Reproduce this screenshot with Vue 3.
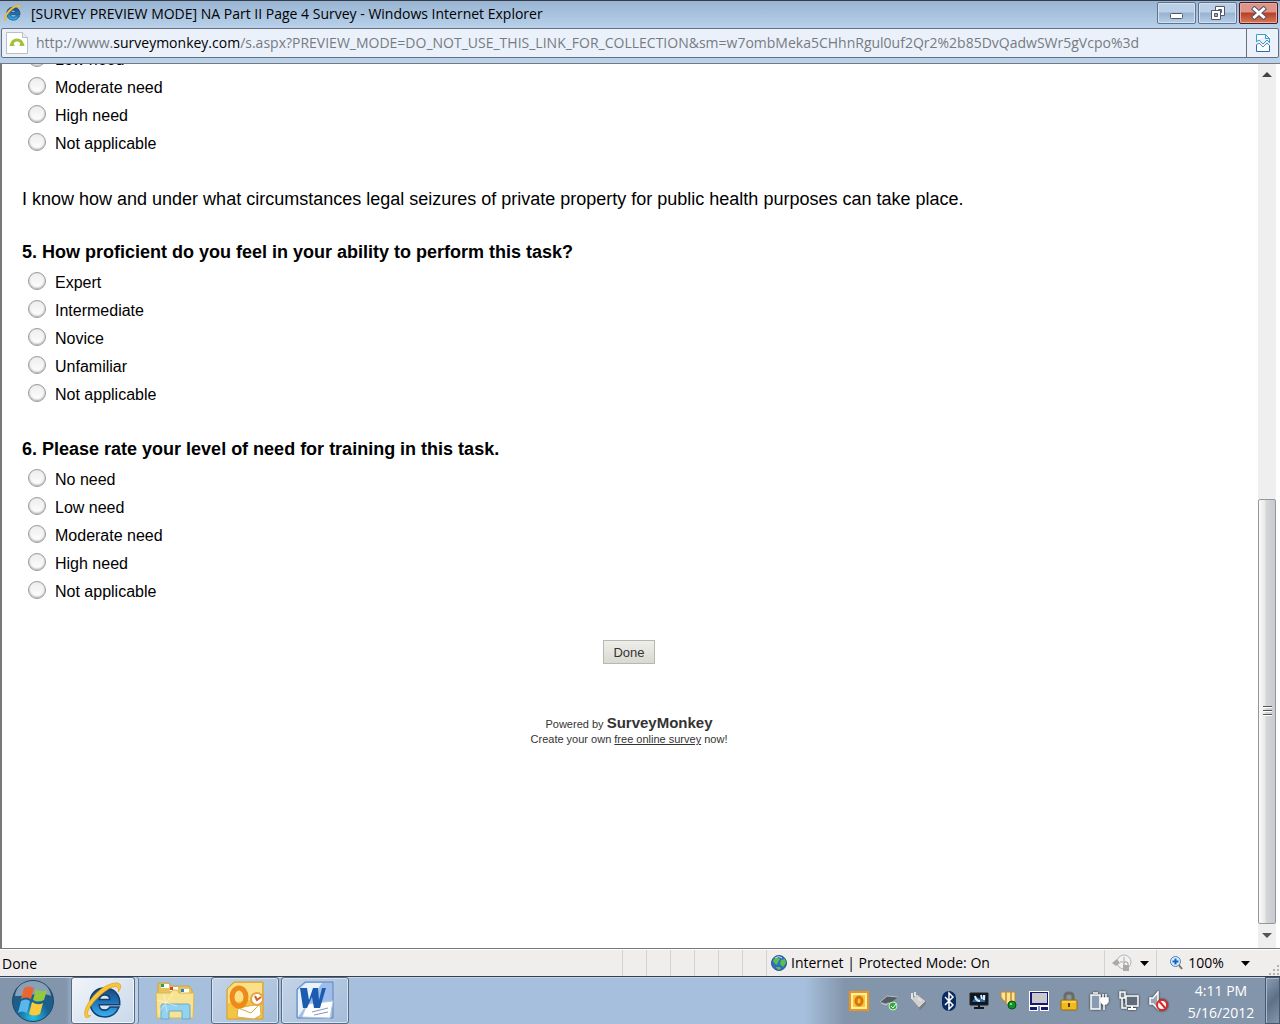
<script setup>
import { ref } from "vue";

const proficiency = ["Expert", "Intermediate", "Novice", "Unfamiliar", "Not applicable"];
const need = ["No need", "Low need", "Moderate need", "High need", "Not applicable"];

const questions = [
  { id: "q4", options: need.slice(1) },
  {
    id: "q5",
    intro: "I know how and under what circumstances legal seizures of private property for public health purposes can take place.",
    title: "5. How proficient do you feel in your ability to perform this task?",
    options: proficiency
  },
  { id: "q6", title: "6. Please rate your level of need for training in this task.", options: need }
];

const answers = ref({});
</script>

<template>
  <div class="window">
    <header class="titlebar">
      <svg class="ie-small" viewBox="0 0 50 50">
        <defs>
          <linearGradient id="ieBlue" x1="0" y1="0" x2="0" y2="1">
            <stop offset="0" stop-color="#1b4777" />
            <stop offset=".45" stop-color="#1f6fb5" />
            <stop offset="1" stop-color="#38b4f2" />
          </linearGradient>
        </defs>
        <g id="ieLogo">
          <path d="M27 8C15 8 8 16 8 27s8 19 20 19c8 0 15-5 18-13H34c-2 3-4 4-7 4-5 0-7-3-7-7h27C48 16 39 8 27 8zM20 23c1-4 3-6 7-6s7 2 7 6z" fill="url(#ieBlue)" stroke="#123f70" stroke-width="2" />
          <path d="M3 47C-4 40 8 20 23 9 34 1 46-1 48 4c1 3-1 7-3 9 1-4 0-7-4-7C31 6 8 28 5 39c-1 3 0 6 4 5-2 2-4 3-6 3z" fill="#fcc536" stroke="#dfa01d" />
        </g>
      </svg>
      <h1>[SURVEY PREVIEW MODE] NA Part II Page 4 Survey - Windows Internet Explorer</h1>
      <div class="controls">
        <button aria-label="Minimize">
          <svg width="14" height="14"><rect x=".5" y="7.5" width="12" height="5" rx="1" fill="#fff" stroke="#535666" /></svg>
        </button>
        <button aria-label="Restore">
          <svg width="16" height="16">
            <path d="M5.5 1.5h9v9h-9zM8.5 4.5h3v3h-3z" fill="#fff" fill-rule="evenodd" stroke="#535666" />
            <path d="M1.5 5.5h9v9h-9z" fill="#fff" stroke="#535666" />
            <path d="M4.5 8.5h3v3h-3z" fill="#98b3d1" stroke="#535666" />
          </svg>
        </button>
        <button class="close" aria-label="Close">
          <svg width="16" height="14">
            <path d="M3.5 3l9 8M12.5 3l-9 8" stroke="#535666" stroke-width="5" stroke-linecap="square" />
            <path d="M3.5 3l9 8M12.5 3l-9 8" stroke="#fff" stroke-width="3" stroke-linecap="square" />
          </svg>
        </button>
      </div>
    </header>

    <div class="addressbar">
      <svg class="favicon" width="22" height="24">
        <path d="M.5 1.5h16l5 5v16H.5z" fill="#fff" stroke="#b9bdc4" />
        <path d="M16.5 1.5v5h5" fill="#eee" stroke="#b9bdc4" />
        <path d="M5.5 14q1-5 5.5-5t5.5 5" fill="none" stroke="#a5c13b" stroke-width="3" />
        <path d="M3.5 15q0-3 2.500-3t2.500 3zM13.5 15q0-3 2.500-3t2.500 3z" fill="#a5c13b" />
      </svg>
      <div class="url">http://www.<b>surveymonkey.com</b>/s.aspx?PREVIEW_MODE=DO_NOT_USE_THIS_LINK_FOR_COLLECTION&amp;sm=w7ombMeka5CHhnRgul0uf2Qr2%2b85DvQadwSWr5gVcpo%3d</div>
      <button class="compat" aria-label="Compatibility View">
        <svg width="16" height="20" fill="none">
          <path d="M1 8V1h9l5 5v3V1" fill="#fff" />
          <path d="M1.5 8V1.5h9l4 4V9" stroke="#2ca4d3" />
          <path d="M10.5 1.5v4h4" stroke="#2ca4d3" />
          <path d="M1.5 12v6.5h13V12" fill="#fff" stroke="#3268ba" />
          <path d="M1 9l3-2 4 4 4-4 3 3M1 12l3-2 4 4 4-4 3 3" stroke="#4b91c5" />
        </svg>
      </button>
    </div>

    <div class="viewport">
      <main class="page">
        <section v-for="q in questions" :key="q.id">
          <p v-if="q.intro" class="intro">{{ q.intro }}</p>
          <h2 v-if="q.title">{{ q.title }}</h2>
          <label v-for="option in q.options" :key="option" class="option">
            <input v-model="answers[q.id]" type="radio" :name="q.id" :value="option" />
            {{ option }}
          </label>
        </section>
        <button class="done">Done</button>
        <footer>
          <div class="powered">Powered by <strong>SurveyMonkey</strong></div>
          <div>Create your own <a href="#">free online survey</a> now!</div>
        </footer>
      </main>
      <div class="scrollbar">
        <svg width="10" height="5"><path d="M0 5l5-5 5 5z" fill="#444" /></svg>
        <div class="track">
          <div class="thumb"><i></i><i></i><i></i></div>
        </div>
        <svg width="10" height="5"><path d="M0 0l5 5 5-5z" fill="#555" /></svg>
      </div>
    </div>

    <div class="statusbar">
      <span class="message">Done</span>
      <span v-for="n in 6" :key="n" class="cell"></span>
      <span class="zone">
        <svg width="16" height="16">
          <circle cx="8" cy="8" r="7.5" fill="#2f6dc2" stroke="#31548b" />
          <path d="M2 5l4-3 3 2-2 3-1 3-3-2zM10 5l4-1 1 4-3 4-3-3zM5 12h4l1 2-3 1z" fill="#5ac04b" />
          <path d="M4 3q4-3 7 0" stroke="#c5e7fa" fill="none" />
        </svg>
        Internet | Protected Mode: On
      </span>
      <button class="privacy" aria-label="InPrivate filtering">
        <svg width="20" height="18">
          <circle cx="12" cy="8" r="7" fill="#f2f2f2" stroke="#b3b3b3" />
          <path d="M0 9l5-4 3 4-4 3z" fill="#aaa" />
          <path d="M12 3v5H8" fill="none" stroke="#aaa" />
          <path d="M12 11V9q2-3 4 0v2" fill="none" stroke="#999" />
          <rect x="11" y="11" width="6" height="6" fill="#aaa" />
        </svg>
        <svg width="9" height="5"><path d="M0 0h9L4.5 5z" /></svg>
      </button>
      <button class="zoom">
        <svg width="13" height="14">
          <path d="M8 8l4 5" stroke="#8e6652" stroke-width="2" />
          <circle cx="5.5" cy="5.5" r="5" fill="#d8efff" stroke="#4c83b8" />
          <path d="M2.5 5.5h6M5.5 2.500v6" stroke="#1765b5" stroke-width="2" />
        </svg>
        <span>100%</span>
        <svg width="9" height="5"><path d="M0 0h9L4.5 5z" /></svg>
      </button>
      <svg class="grip" width="11" height="11" fill="#b5b1b1">
        <path d="M8 0h2v2H8zM4 4h2v2H4zM8 4h2v2H8zM0 8h2v2H0zM4 8h2v2H4zM8 8h2v2H8z" />
      </svg>
    </div>

    <nav class="taskbar">
      <button class="start" aria-label="Start">
        <svg width="44" height="44">
          <defs>
            <radialGradient id="orb" cx=".5" cy=".9" r=".8">
              <stop offset="0" stop-color="#25c2e8" />
              <stop offset=".5" stop-color="#176292" />
              <stop offset="1" stop-color="#28547b" />
            </radialGradient>
          </defs>
          <circle cx="22" cy="22" r="20.5" fill="url(#orb)" stroke="#214765" />
          <path d="M4 17C6-3 38-3 40 17 30 12 15 18 4 17z" fill="#fff" opacity=".45" />
          <path d="M13 9q5-3 10 0l-3 11q-5-3-10 0z" fill="#ed6430" />
          <path d="M25 10q5 4 11 1l-3 10q-6 3-11 0z" fill="#93c83f" />
          <path d="M10 22q5-3 9 0l-3 12q-5-3-9 0z" fill="#5ab7ec" />
          <path d="M21 23q6 4 11 1l-3 11q-6 3-11 0z" fill="#fbc93c" />
        </svg>
      </button>
      <button class="task active" aria-label="Internet Explorer">
        <svg width="38" height="40" viewBox="0 0 50 50"><use href="#ieLogo" /></svg>
      </button>
      <button class="task plain" aria-label="Windows Explorer">
        <svg width="42" height="40">
          <path d="M4 6V2h11l2 3h18l3 4v27H3z" fill="#e6c45d" stroke="#c9a647" />
          <path d="M7 3h8v4H7z" fill="#fff" /><path d="M7 3h3v3H7z" fill="#24a34b" />
          <path d="M16 6h8v4h-8z" fill="#fff" /><path d="M16 6h3v3h-3z" fill="#d84032" />
          <path d="M27 8h8v4h-8z" fill="#fff" /><path d="M27 8h3v3h-3z" fill="#2784ca" />
          <path d="M2 12h14l3-3h4l2 3h15l-1 25H3z" fill="#f7e394" stroke="#d7b854" />
          <path d="M7 25q0-2 2-2h25q2 0 2 2v13h-8v-8H15v8H7z" fill="#94d2ee" stroke="#68aacd" />
          <path d="M4 32L19 13M3 19l20 6M10 14l3 17" stroke="#fff" opacity=".5" />
        </svg>
      </button>
      <button class="task" aria-label="Outlook">
        <svg width="40" height="40">
          <path d="M9 1h29v37H2V8z" fill="#f4c545" stroke="#d99b20" />
          <path d="M10 2h27v15L3 22V8z" fill="#fbe08a" />
          <path d="M13 27l22-4 1 11-7 4-17-2z" fill="#fff" stroke="#e0ab44" /><path d="M13 27l13 5 9-9" fill="none" stroke="#e1a83c" />
          <ellipse cx="14" cy="16" rx="7" ry="9" fill="none" stroke="#ee8a17" stroke-width="5" />
          <circle cx="32" cy="18" r="6" fill="#fff" stroke="#e6a541" stroke-width="2" /><path d="M30 15l2 4 4-3" fill="none" stroke="#d85b22" stroke-width="2" />
        </svg>
      </button>
      <button class="task" aria-label="Word">
        <svg width="40" height="40">
          <path d="M10 1h28v36H2V8z" fill="#9fbdeb" stroke="#5c83bf" />
          <path d="M3 9l8-7h16L3 36z" fill="#eaf2fc" />
          <path d="M12 23l26-3-3 17-28-1z" fill="#fff" stroke="#b5c7e2" />
          <path d="M17 31l16-4M19 34l14-3" stroke="#809abd" />
          <path d="M5 7h7l2 12 4-12h5l1 12L27 7h4l-6 20h-6l-2-11-5 11H8z" fill="#1c5cb0" />
        </svg>
      </button>

      <div class="tray">
        <svg viewBox="0 0 20 20"><rect x="1" y="1" width="18" height="18" fill="#fff0b2" stroke="#ee9417" stroke-width="2" /><path d="M4 4h12v12H4z" fill="#ffc624" /><ellipse cx="10" cy="10" rx="3" ry="4" fill="none" stroke="#d4751b" stroke-width="3" /></svg>
        <svg viewBox="0 0 20 20"><path d="M1 11l7-6 11 1-6 5-7 1z" fill="#555b62" /><path d="M1 11l7-6 11 1" stroke="#b8bdc1" fill="none" /><path d="M2 12l5 2 3-2" stroke="#ccc" fill="none" /><circle cx="14" cy="15" r="4" fill="#2cab37" stroke="#d4edd2" /><path d="M12 15l2 2 3-4" stroke="#fff" fill="none" /></svg>
        <svg viewBox="0 0 20 20"><path d="M2 8l6-5 9 7-7 7z" fill="#d0d1d0" stroke="#858b90" /><path d="M10 17l7-7v3l-6 6z" fill="#777d83" /><path d="M3 2v6M6 1v4M9 7l3 3" stroke="#e2e2e2" stroke-width="2" /></svg>
        <svg viewBox="0 0 20 20"><rect x="3" width="14" height="20" rx="7" fill="#092b60" /><path d="M6 6l8 8-4 4V2l4 4-8 8" fill="none" stroke="#fff" stroke-width="1.5" /></svg>
        <svg viewBox="0 0 20 20"><path d="M1 2h18v12H1z" fill="#0d1724" stroke="#222" /><path d="M3 11q3-6 7-4t7-4l-1 8z" fill="#2e6ba5" /><path d="M6 5q1 5 5 5M12 4l1 4M15 4v5" fill="none" stroke="#dcecf8" stroke-width="2" /><path d="M5 17h10M10 14v3" stroke="#15191d" stroke-width="2" /></svg>
        <svg viewBox="0 0 20 20"><path d="M2 1h5v10L4 9 2 6zM7 1h5v15l-5-4zM12 1h4v12h-4z" fill="#ffe391" stroke="#b88b35" /><circle cx="13" cy="14" r="4" fill="#14912c" stroke="#075414" /><circle cx="12" cy="13" r="1" fill="#a4f2a2" /></svg>
        <svg viewBox="0 0 20 20"><path d="M0 0h20v15H0zM0 15h9v5H0zM11 15h9v5h-9z" fill="#fff" /><path d="M1 1h18v13H1z" fill="#171776" /><path d="M3 2h15v10H3z" fill="#c9c9c9" /><path d="M1 16h7v3H1zM12 16h7v3h-7z" fill="#171776" /></svg>
        <svg viewBox="0 0 20 20"><path d="M6 10V5q0-3 4-3t4 3v5" fill="none" stroke="#6b6c65" stroke-width="3" /><rect x="2" y="9" width="16" height="10" rx="1" fill="#f1ba1e" stroke="#93710f" /><path d="M3 11h14" stroke="#ffe481" /><path d="M10 12v4" stroke="#554100" stroke-width="2" /></svg>
        <svg class="outlined" viewBox="0 0 20 20"><path d="M2 4h9v14H2zM4 2h5" fill="#8a9bb1" stroke="#fff" stroke-width="1.5" /><path d="M12 7h7v4l-2 2h-3l-2-2zM14 3v4M17 3v4M15 13v6" fill="#fff" stroke="#fff" stroke-width="1.5" /></svg>
        <svg class="outlined" viewBox="0 0 20 20"><path d="M7 5h12v10H7z" fill="#5d6b7b" stroke="#fff" stroke-width="1.5" /><path d="M9 18h8M13 15v3" stroke="#fff" stroke-width="2" /><path d="M1 1h5v6H1zM3 7v10h5" fill="#75818f" stroke="#fff" stroke-width="1.5" /></svg>
        <svg class="outlined" viewBox="0 0 20 20"><path d="M1 7h3l5-6v17l-5-5H1z" fill="#97a6b8" stroke="#fff" stroke-width="1.5" /><circle cx="13" cy="14" r="5" fill="#fff" stroke="#df2929" stroke-width="2" /><path d="M10 10l7 8" stroke="#df2929" stroke-width="2" /></svg>
      </div>
      <time class="clock">4:11 PM<br />5/16/2012</time>
      <button class="show-desktop" aria-label="Show desktop"></button>
    </nav>
  </div>
</template>

<style>
body {
  margin: 0;
}
</style>

<style scoped>
.window {
  height: 100vh;
  display: flex;
  flex-direction: column;
  overflow: hidden;
  background: #b9d1ea;
  font-family: "Open Sans", "Noto Sans", sans-serif;
  font-size: 14px;
  color: #000;
}

button {
  margin: 0;
  padding: 0;
  border: 0;
  background: none;
  font: inherit;
  display: flex;
  align-items: center;
  justify-content: center;
}

.titlebar {
  height: 28px;
  box-sizing: border-box;
  border-top: 1px solid #343b46;
  padding: 0 2px 0 4px;
  display: flex;
  background: linear-gradient(#98b4d2, #b9d1ea);
}

.ie-small {
  width: 17px;
  height: 18px;
  margin-top: 3px;
  flex: none;
}

h1 {
  flex: 1;
  margin: 0 0 0 10px;
  font-size: 14px;
  font-weight: 400;
  line-height: 26px;
  white-space: nowrap;
}

.controls {
  display: flex;
  gap: 2px;
  padding-top: 1px;
}

.controls button {
  width: 39px;
  height: 22px;
  box-sizing: border-box;
  border: 1px solid #60738d;
  border-radius: 2px;
  box-shadow: inset 0 0 0 1px #d1e1f2;
  background: linear-gradient(#bbd0e7 45%, #98b3d1 50%, #b5cee8);
}

.controls .close {
  border-color: #4e1822;
  box-shadow: inset 0 0 0 1px #e8aaa0;
  background: linear-gradient(#dc9689 45%, #b73e27 50%, #d47a57);
}

.addressbar {
  height: 30px;
  box-sizing: border-box;
  margin: 0 1px;
  border: 1px solid #696f7a;
  border-radius: 2px;
  display: flex;
  align-items: center;
  background: #eaf1fb;
}

.favicon {
  margin: 0 8px 0 4px;
  flex: none;
}

.url {
  flex: 1;
  min-width: 0;
  overflow: hidden;
  white-space: nowrap;
  line-height: 28px;
  color: #777b80;
}

.url b {
  font-weight: 400;
  color: #000;
}

.compat {
  width: 32px;
  align-self: stretch;
  border-left: 1px solid #696f7a;
}

.viewport {
  flex: 1;
  min-height: 0;
  margin-top: 5px;
  border: solid #77787a;
  border-width: 1px 0 1px 2px;
  display: flex;
  background: #fff;
}

/* the page is scrolled to its end, so the first answers run off the top */
.page {
  flex: 1;
  display: flex;
  flex-direction: column;
  justify-content: flex-end;
  overflow: hidden;
  padding: 0 22px 201px 20px;
  font-family: "Liberation Sans", Arial, sans-serif;
}

section {
  flex: none;
}

.intro {
  margin: 28px 0 0;
  font-size: 18px;
  line-height: 26px;
}

h2 {
  margin: 24px 0 0;
  font-size: 18px;
  line-height: 33px;
}

.option {
  height: 28px;
  display: flex;
  align-items: center;
  gap: 9px;
  padding-left: 6px;
  font-size: 16px;
}

.option input {
  appearance: none;
  width: 18px;
  height: 18px;
  margin: 0 0 4px;
  border: 1px solid #9b9b9b;
  border-radius: 50%;
  background: linear-gradient(#ededed, #fff);
  box-shadow: inset 0 -1px 2px #aaa;
}

.option input:checked {
  background: radial-gradient(#444 35%, #f5f5f5 40%);
}

.done {
  width: 52px;
  height: 24px;
  flex: none;
  align-self: center;
  margin-top: 34px;
  border: 1px solid #b7b7b3;
  background: linear-gradient(#efefea, #d8d9d0);
  font-size: 13px;
  color: #333;
}

footer {
  margin-top: 51px;
  text-align: center;
  font-size: 11px;
  line-height: 15px;
  color: #333;
}

.powered {
  line-height: 16px;
}

.powered strong {
  font-size: 15px;
}

footer a {
  color: #333;
}

.scrollbar {
  width: 18px;
  margin-right: 4px;
  display: flex;
  flex-direction: column;
  align-items: center;
  justify-content: space-between;
  padding: 8px 0 10px;
  background: #efefef;
}

.track {
  flex: 1;
  align-self: stretch;
  margin: 0 0 9px;
  display: flex;
  flex-direction: column;
  justify-content: flex-end;
}

.thumb {
  height: 50%;
  border: 1px solid #96979b;
  border-radius: 2px;
  display: flex;
  flex-direction: column;
  align-items: center;
  justify-content: center;
  gap: 2px;
  background: linear-gradient(90deg, #fafafa, #eaeaeb 35%, #d5d6d9 45%, #c7c9ce);
}

.thumb i {
  width: 9px;
  height: 2px;
  background: linear-gradient(#555 50%, #fff 50%);
}

.statusbar {
  height: 27px;
  display: flex;
  align-items: stretch;
  background: #f0eded;
  border-top: 1px solid #fff;
  box-sizing: border-box;
  line-height: 28px;
}

.message {
  flex: 1;
  padding-left: 2px;
}

.cell {
  width: 23px;
  border-left: 1px solid #d2d2d0;
}

.zone {
  width: 333px;
  display: flex;
  align-items: center;
  gap: 4px;
  padding-left: 4px;
  border-left: 1px solid #d2d2d0;
}

.privacy {
  width: 52px;
  gap: 8px;
  border-left: 1px solid #d2d2d0;
}

.zoom {
  width: 113px;
  gap: 5px;
  border-left: 1px solid #d2d2d0;
}

.zoom span {
  margin-right: 12px;
}

.zoom svg:first-child {
  margin-left: -6px;
}

.grip {
  align-self: flex-end;
}

.taskbar {
  height: 48px;
  display: flex;
  align-items: stretch;
  box-sizing: border-box;
  border-top: 1px solid #34404f;
  box-shadow: inset 0 1px #c7d6e7;
  background: linear-gradient(90deg, #8395ab 66px, #a6bfdc 76px, #a6bfdc calc(100% - 475px), #8395ab calc(100% - 435px));
}

.start {
  width: 66px;
  margin-right: 5px;
}

.task {
  width: 68px;
  margin-right: 2px;
  box-sizing: border-box;
  border: 1px solid #596b80;
  border-radius: 3px;
  box-shadow: inset 0 0 0 1px #d7e3f0;
  background: linear-gradient(135deg, #c4d4e7, #a4bcd9);
}

.task.active {
  width: 64px;
  margin-right: 5px;
  background: linear-gradient(135deg, #f2f5f9, #c8d8ea);
  box-shadow: inset 0 0 0 1px #eef4fa, 3px 0 #bdd0e6, 4px 0 #6f8299;
}

.task.plain {
  width: 69px;
  border-color: transparent;
  box-shadow: none;
  background: none;
}

.tray {
  margin-left: auto;
  display: flex;
  align-items: center;
  gap: 10px;
}

.tray svg {
  width: 20px;
  height: 20px;
}

.tray .outlined {
  filter: drop-shadow(0 0 1px #222);
}

.clock {
  width: 78px;
  margin: 3px 5px 0 13px;
  text-align: center;
  line-height: 22px;
  color: #fff;
}

.show-desktop {
  width: 15px;
  border: 1px solid #46586d;
  box-shadow: inset 1px 1px #a9b8c9;
  background: linear-gradient(135deg, #8b9db2, #5c7087 50%, #8496ac);
}
</style>
